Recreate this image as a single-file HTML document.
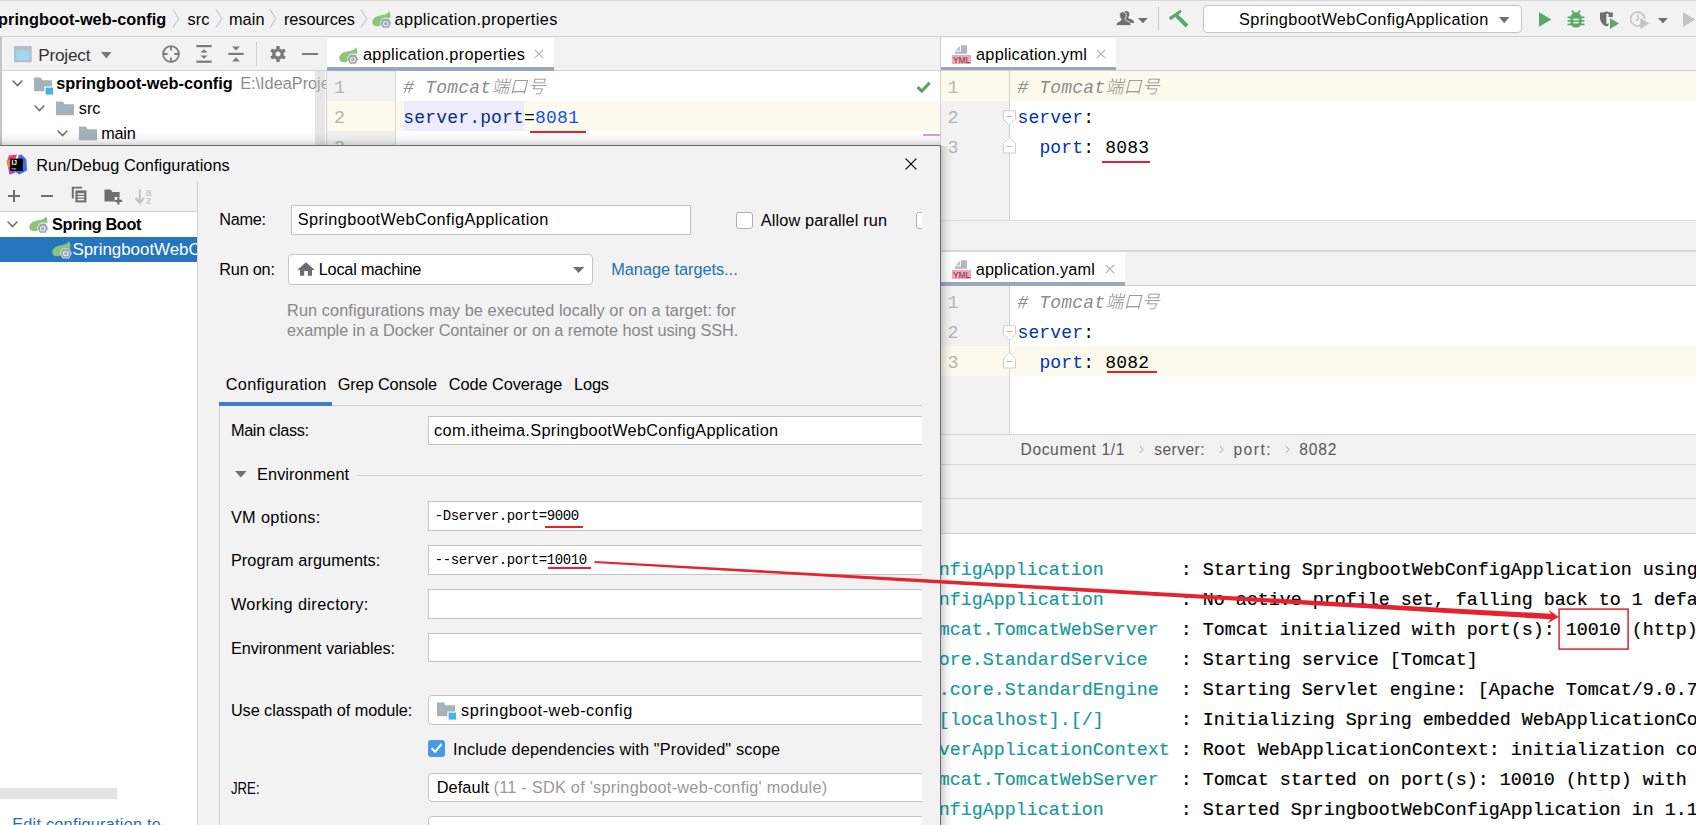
<!DOCTYPE html>
<html lang="zh"><head><meta charset="utf-8"><title>Run/Debug Configurations</title>
<style>
html,body{margin:0;padding:0;background:#f2f2f2;}
#root{position:relative;width:1696px;height:825px;overflow:hidden;background:#f2f2f2;font-family:"Liberation Sans","Noto Sans CJK SC",sans-serif;}
.b{position:absolute;box-sizing:border-box;}
.t{position:absolute;white-space:pre;line-height:20px;height:20px;}
.m{position:absolute;white-space:pre;font-family:"Liberation Mono","Noto Sans CJK SC",monospace;font-size:18px;line-height:30px;height:30px;letter-spacing:0.19px;margin-top:1.1px;}
.c{position:absolute;white-space:pre;font-family:"Liberation Mono","Noto Sans CJK SC",monospace;font-size:18.333px;line-height:30px;height:30px;color:#000;margin-top:2.1px;-webkit-text-stroke:0.2px currentColor;}
.ln{position:absolute;white-space:pre;font-family:"Liberation Mono","Noto Sans CJK SC",monospace;font-size:18.4px;line-height:30px;height:30px;color:#b4b4b4;margin-top:2.3px;}
.cy{color:#1a9a9a}
.k{color:#0033b3}.pk{color:#083080}.n{color:#1750eb}.cm{color:#8c8c8c;font-style:italic}
.clip{position:absolute;overflow:hidden;}
</style></head><body><div id="root">
<div class="b" style="left:0px;top:0px;width:1696px;height:37px;background:#f2f2f2;border-top:1px solid #d6d6d6;border-bottom:1px solid #d1d1d1;"></div>
<span class="t" style="left:-2.00px;top:8.62px;font-size:16.3px;color:#000;font-weight:700;letter-spacing:0.053px;">pringboot-web-config</span>
<svg class="b" style="left:171.5px;top:8.6px;" width="8" height="20" viewBox="0 0 8 20"><path d="M1 0.5 L6.8 9.6 L1 18.7" fill="none" stroke="#b9bcbf" stroke-width="1"/></svg>
<span class="t" style="left:187.50px;top:8.62px;font-size:16.3px;color:#000;font-weight:400;letter-spacing:0.136px;">src</span>
<svg class="b" style="left:214.5px;top:8.6px;" width="8" height="20" viewBox="0 0 8 20"><path d="M1 0.5 L6.8 9.6 L1 18.7" fill="none" stroke="#b9bcbf" stroke-width="1"/></svg>
<span class="t" style="left:229.00px;top:8.62px;font-size:16.3px;color:#000;font-weight:400;letter-spacing:0.056px;">main</span>
<svg class="b" style="left:268.5px;top:8.6px;" width="8" height="20" viewBox="0 0 8 20"><path d="M1 0.5 L6.8 9.6 L1 18.7" fill="none" stroke="#b9bcbf" stroke-width="1"/></svg>
<span class="t" style="left:284.00px;top:8.62px;font-size:16.3px;color:#000;font-weight:400;letter-spacing:-0.071px;">resources</span>
<svg class="b" style="left:359.5px;top:8.6px;" width="8" height="20" viewBox="0 0 8 20"><path d="M1 0.5 L6.8 9.6 L1 18.7" fill="none" stroke="#b9bcbf" stroke-width="1"/></svg>
<svg class="b" style="left:372px;top:10.6px;overflow:visible;" width="20" height="18" viewBox="0 0 20 18"><path d="M17.2 0.2 C15.5 3 12 4 8 4.6 C3.5 5.4 0.2 8 0.3 11.6 C0.4 14.4 3 15.6 6.2 15.2 C7.6 15 8.4 14.6 9 14 L9 9 L13 6.8 L18.4 6.8 C18.6 4.4 18.2 2.2 17.2 0.2 Z" fill="#8cc577"/><path d="M8.2 12.2 L10.7 7.3 L16.9 7.3 L19.4 12.2 L16.9 17.1 L10.7 17.1 Z" fill="#9aa7b0" stroke="#f4f6f4" stroke-width="0.7"/><circle cx="13.8" cy="12.5" r="2.3" fill="none" stroke="#e9edf0" stroke-width="1.1"/><rect x="13.2" y="9.2" width="1.2" height="3.2" fill="#e9edf0" stroke="#9aa7b0" stroke-width="0.5"/></svg>
<span class="t" style="left:394.50px;top:8.62px;font-size:16.3px;color:#000;font-weight:400;letter-spacing:0.383px;">application.properties</span>
<svg class="b" style="left:1116px;top:11px;" width="19" height="15" viewBox="0 0 19 15"><g transform="translate(3.6 -0.6) scale(0.96 0.86)"><path d="M6.6 0.8 C9 0.8 10.4 2.4 10.2 4.8 C10.1 6.4 9.4 7.6 8.8 8.4 C9.2 9.6 11.6 10 13.4 11 C14.4 11.6 14.9 12.8 14.9 14.6 L0.2 14.6 C0.2 12.8 0.8 11.6 1.8 11 C3.8 10 5.4 9.6 5.4 8.4 C4.6 7.6 3.6 6.4 3.5 4.8 C3.3 2.4 4.6 0.8 6.6 0.8 Z" fill="#6e6e6e"/></g><path d="M6.6 0.8 C9 0.8 10.4 2.4 10.2 4.8 C10.1 6.4 9.4 7.6 8.8 8.4 C9.2 9.6 11.6 10 13.4 11 C14.4 11.6 14.9 12.8 14.9 14.6 L0.2 14.6 C0.2 12.8 0.8 11.6 1.8 11 C3.8 10 5.4 9.6 5.4 8.4 C4.6 7.6 3.6 6.4 3.5 4.8 C3.3 2.4 4.6 0.8 6.6 0.8 Z" fill="#6e6e6e" stroke="#f2f2f2" stroke-width="0.9"/></svg>
<svg class="b" style="left:1138.2px;top:18px;" width="9.8" height="5.2" viewBox="0 0 9.8 5.2"><path d="M0 0 H9.8 L4.9 5.2 Z" fill="#6e6e6e"/></svg>
<div class="b" style="left:1158px;top:7px;width:1px;height:24px;background:#c9c9c9;"></div>
<svg class="b" style="left:1168px;top:9px;" width="21" height="19" viewBox="0 0 21 19"><path d="M0.8 8.4 L11.4 1.2 L13.2 1 L13.2 3.6 L2.8 11.2 Z" fill="#59a869"/><path d="M6 6.8 L9 4.4 L20.4 15.6 L17.6 18.4 Z" fill="#59a869"/></svg>
<div class="b" style="left:1203px;top:5px;width:319px;height:28px;background:#fff;border:1px solid #c4c4c4;border-radius:4px;"></div>
<span class="t" style="left:1239.00px;top:9.42px;font-size:16.3px;color:#000;font-weight:400;letter-spacing:0.365px;">SpringbootWebConfigApplication</span>
<svg class="b" style="left:1499px;top:16.6px;" width="10.4" height="6.2" viewBox="0 0 10.4 6.2"><path d="M0 0 H10.4 L5.2 6.2 Z" fill="#6e6e6e"/></svg>
<svg class="b" style="left:1539px;top:11.5px;" width="13" height="15" viewBox="0 0 13 15"><path d="M0 0.2 L12.4 7.5 L0 14.8 Z" fill="#59a869"/></svg>
<svg class="b" style="left:1567px;top:10px;" width="18" height="18" viewBox="0 0 18 18"><g fill="#59a869"><path d="M3.4 9 C3.4 5 5.6 2.6 9 2.6 C12.4 2.6 14.6 5 14.6 9 V12 C14.6 15.4 12.4 17.6 9 17.6 C5.6 17.6 3.4 15.4 3.4 12 Z"/></g><g stroke="#59a869" stroke-width="1.8" fill="none"><path d="M5 0.6 L7.4 3.6"/><path d="M13 0.6 L10.6 3.6"/><path d="M0.6 7.4 H4 M14 7.4 H17.4"/><path d="M0.6 10.9 H4 M14 10.9 H17.4"/><path d="M0.6 14.4 H4 M14 14.4 H17.4"/></g><g fill="#f2f2f2"><rect x="6.3" y="8.6" width="5.4" height="1.6"/><rect x="6.3" y="11.8" width="5.4" height="1.6"/></g></svg>
<svg class="b" style="left:1599px;top:11px;" width="21" height="19" viewBox="0 0 21 19"><path d="M1 1.6 C4 1.6 6 1 7.4 0.2 C9 1 11 1.6 13.8 1.6 V6 H9.6 V3 L7.4 2.4 V13.2 L9.6 12 V14.2 C9 14.8 8.2 15.2 7.4 15.6 C3.4 13.8 1 10.6 1 6.6 Z" fill="#6e6e6e"/><path d="M11 7 L20 12.5 L11 18 Z" fill="#59a869"/></svg>
<svg class="b" style="left:1630px;top:10px;" width="20" height="20" viewBox="0 0 20 20"><path d="M10.6 15.3 A7 7 0 1 1 14.6 9" fill="none" stroke="#c2c2c2" stroke-width="1.5"/><path d="M8 4.6 V9 L6.4 11" fill="none" stroke="#c2c2c2" stroke-width="1.3"/><path d="M10.4 8 L19 13.5 L10.4 19 Z" fill="#c2c2c2"/></svg>
<svg class="b" style="left:1658px;top:17.8px;" width="9.8" height="5.4" viewBox="0 0 9.8 5.4"><path d="M0 0 H9.8 L4.9 5.4 Z" fill="#6e6e6e"/></svg>
<svg class="b" style="left:1683px;top:11.5px;" width="13" height="15" viewBox="0 0 13 15"><path d="M0 0.2 L12.4 7.5 L0 14.8 Z" fill="#c2c2c2"/></svg>
<div class="b" style="left:0px;top:37px;width:2px;height:110px;background:#c6c6c6;"></div>
<div class="b" style="left:2px;top:37px;width:325px;height:34px;background:#f2f2f2;"></div>
<div class="b" style="left:2px;top:70px;width:325px;height:1px;background:#d1d1d1;"></div>
<svg class="b" style="left:14px;top:46.4px;" width="18" height="17" viewBox="0 0 18 17"><rect x="0" y="0" width="17.7" height="16.3" fill="#b7bfc6"/><rect x="2.2" y="4.4" width="13.3" height="9.8" fill="#9fd8ef"/></svg>
<span class="t" style="left:38.20px;top:44.86px;font-size:17.2px;color:#333;font-weight:400;letter-spacing:-0.206px;">Project</span>
<svg class="b" style="left:100.7px;top:52.3px;" width="10.6" height="6.4" viewBox="0 0 10.6 6.4"><path d="M0 0 H10.6 L5.3 6.4 Z" fill="#7a7a7a"/></svg>
<svg class="b" style="left:162px;top:45px;" width="18" height="18" viewBox="0 0 18 18"><circle cx="9" cy="9" r="7.9" fill="none" stroke="#7a7a7a" stroke-width="1.8"/><path d="M9 1 V5.6 M9 12.4 V17 M1 9 H5.6 M12.4 9 H17" stroke="#7a7a7a" stroke-width="1.8"/></svg>
<svg class="b" style="left:196px;top:45px;" width="16" height="18" viewBox="0 0 16 18"><g fill="#7a7a7a"><rect x="0.3" y="0" width="15.4" height="2.2"/><rect x="0.3" y="15.6" width="15.4" height="2.2"/><path d="M8 4.2 L11.6 7.6 H4.4 Z"/><path d="M8 13.8 L11.6 10.4 H4.4 Z"/></g></svg>
<svg class="b" style="left:228px;top:45px;" width="16" height="18" viewBox="0 0 16 18"><g fill="#7a7a7a"><rect x="0.3" y="7.8" width="15.4" height="2.2"/><path d="M8 5.6 L11.8 1.4 H4.2 Z"/><path d="M8 12.2 L11.8 16.4 H4.2 Z"/></g></svg>
<div class="b" style="left:256px;top:42px;width:1px;height:24px;background:#d1d1d1;"></div>
<svg class="b" style="left:270px;top:46px;" width="16" height="16" viewBox="0 0 16 16"><g transform="translate(8 8)"><g fill="#7a7a7a"><rect x="-1.7" y="-8" width="3.4" height="16" rx="0.6"/><rect x="-1.7" y="-8" width="3.4" height="16" rx="0.6" transform="rotate(60)"/><rect x="-1.7" y="-8" width="3.4" height="16" rx="0.6" transform="rotate(120)"/><circle r="5.8"/></g><circle r="2.5" fill="#f2f2f2"/></g></svg>
<div class="b" style="left:302.4px;top:52.8px;width:15.4px;height:2.2px;background:#7a7a7a;"></div>
<div class="b" style="left:2px;top:71px;width:325px;height:76px;background:#fff;"></div>
<svg class="b" style="left:12px;top:80.4px;" width="11" height="7" viewBox="0 0 11 7"><path d="M0.6 0.6 L5.5 5.6 L10.4 0.6" fill="none" stroke="#6e6e6e" stroke-width="1.5"/></svg>
<svg class="b" style="left:34px;top:76.5px;" width="19" height="18" viewBox="0 0 19 18"><path d="M0 0.5 H6.8 L8.6 3.2 H18 V9.4 H10.4 V14.2 H0 Z" fill="#a6b2ba"/><rect x="11.6" y="10.6" width="7.4" height="7" fill="#40b6e0"/></svg>
<span class="t" style="left:56.20px;top:73.02px;font-size:16.3px;color:#000;font-weight:700;letter-spacing:0.012px;">springboot-web-config</span>
<div class="clip" style="left:236px;top:71px;width:90px;height:25px;">
<span class="t" style="left:4.20px;top:2.01px;font-size:16.3px;color:#8c8c8c;font-weight:400;">E:\IdeaProjects</span>
</div>
<svg class="b" style="left:34px;top:105.4px;" width="11" height="7" viewBox="0 0 11 7"><path d="M0.6 0.6 L5.5 5.6 L10.4 0.6" fill="none" stroke="#6e6e6e" stroke-width="1.5"/></svg>
<svg class="b" style="left:56px;top:101px;" width="19" height="18" viewBox="0 0 19 18"><path d="M0 0.5 H6.8 L8.6 3.2 H18 V14.2 H0 Z" fill="#a6b2ba"/></svg>
<span class="t" style="left:78.80px;top:98.02px;font-size:16.3px;color:#000;font-weight:400;letter-spacing:-0.014px;">src</span>
<svg class="b" style="left:56.7px;top:130.4px;" width="11" height="7" viewBox="0 0 11 7"><path d="M0.6 0.6 L5.5 5.6 L10.4 0.6" fill="none" stroke="#6e6e6e" stroke-width="1.5"/></svg>
<svg class="b" style="left:79px;top:126px;" width="19" height="18" viewBox="0 0 19 18"><path d="M0 0.5 H6.8 L8.6 3.2 H18 V14.2 H0 Z" fill="#a6b2ba"/></svg>
<span class="t" style="left:101.20px;top:123.01px;font-size:16.3px;color:#000;font-weight:400;letter-spacing:-0.244px;">main</span>
<div class="b" style="left:315px;top:71px;width:10px;height:76px;background:rgba(200,200,200,0.45);"></div>
<div class="b" style="left:326px;top:37px;width:614px;height:34px;background:#f2f2f2;"></div>
<div class="b" style="left:326px;top:70px;width:614px;height:1px;background:#d1d1d1;"></div>
<div class="b" style="left:327px;top:38px;width:227px;height:33px;background:#fff;"></div>
<div class="b" style="left:327px;top:67px;width:227px;height:4px;background:#9aa7bc;"></div>
<svg class="b" style="left:338.8px;top:46.6px;overflow:visible;" width="20" height="18" viewBox="0 0 20 18"><path d="M17.2 0.2 C15.5 3 12 4 8 4.6 C3.5 5.4 0.2 8 0.3 11.6 C0.4 14.4 3 15.6 6.2 15.2 C7.6 15 8.4 14.6 9 14 L9 9 L13 6.8 L18.4 6.8 C18.6 4.4 18.2 2.2 17.2 0.2 Z" fill="#8cc577"/><path d="M8.2 12.2 L10.7 7.3 L16.9 7.3 L19.4 12.2 L16.9 17.1 L10.7 17.1 Z" fill="#9aa7b0" stroke="#f4f6f4" stroke-width="0.7"/><circle cx="13.8" cy="12.5" r="2.3" fill="none" stroke="#e9edf0" stroke-width="1.1"/><rect x="13.2" y="9.2" width="1.2" height="3.2" fill="#e9edf0" stroke="#9aa7b0" stroke-width="0.5"/></svg>
<span class="t" style="left:362.90px;top:44.21px;font-size:16.3px;color:#000;font-weight:400;letter-spacing:0.340px;">application.properties</span>
<svg class="b" style="left:534px;top:49px;" width="10" height="10" viewBox="0 0 10 10"><path d="M0.8 0.8 L9.2 9.2 M9.2 0.8 L0.8 9.2" stroke="#b0b0b0" stroke-width="1.1"/></svg>
<div class="b" style="left:326px;top:71px;width:1px;height:76px;background:#d1d1d1;"></div>
<div class="b" style="left:327px;top:71px;width:613px;height:76px;background:#fff;"></div>
<div class="b" style="left:327px;top:71px;width:68px;height:76px;background:#f2f2f2;"></div>
<div class="b" style="left:327px;top:101px;width:613px;height:30px;background:#fcfaed;"></div>
<div class="b" style="left:395px;top:71px;width:1px;height:76px;background:#d9d9d9;"></div>
<div class="b" style="left:404px;top:101px;width:120px;height:30px;background:#edebfc;"></div>
<span class="ln" style="left:334px;top:72px;">1</span>
<span class="ln" style="left:334px;top:102px;">2</span>
<span class="ln" style="left:334px;top:132px;">3</span>
<span class="m cm" style="left:403.2px;top:72px;"># Tomcat<span style="font-weight:300">端口号</span></span>
<span class="m" style="left:403.2px;top:102px;"><span class="pk">server.port</span>=<span class="n">8081</span></span>
<div class="b" style="left:530px;top:131px;width:56px;height:2px;background:#e6212b;"></div>
<svg class="b" style="left:916px;top:81.4px;" width="15" height="13" viewBox="0 0 15 13"><path d="M1.6 6.2 L5.8 10.2 L13.6 1.8" fill="none" stroke="#4fa65a" stroke-width="3"/></svg>
<div class="b" style="left:923px;top:134px;width:17px;height:2px;background:#c9a4f2;"></div>
<div class="b" style="left:940px;top:37px;width:1px;height:790px;background:#d1d1d1;"></div>
<div class="b" style="left:941px;top:38px;width:175px;height:33px;background:#fff;"></div>
<div class="b" style="left:941px;top:67px;width:175px;height:4px;background:#9aa7bc;"></div>
<div class="b" style="left:941px;top:70px;width:755px;height:1px;background:#d1d1d1;"></div>
<div class="b" style="left:1117px;top:70px;width:579px;height:1px;background:#d1d1d1;"></div>
<svg class="b" style="left:952px;top:45px;" width="19" height="19" viewBox="0 0 19 19"><rect x="0" y="10" width="19" height="9" fill="#f4a6b7"/><path d="M9 0.2 H15 V8.8 H3 V6.4 H9 Z" fill="#aeb9c0"/><path d="M8.2 0.8 V5.6 H3.4 Z" fill="#b9c3c9"/><text x="9.5" y="17.6" font-family='"Liberation Sans","Noto Sans CJK SC",sans-serif' font-size="8.4" font-weight="400" fill="#5a3844" text-anchor="middle" textLength="17" lengthAdjust="spacingAndGlyphs">YML</text></svg>
<span class="t" style="left:976.10px;top:44.21px;font-size:16.3px;color:#000;font-weight:400;letter-spacing:0.220px;">application.yml</span>
<svg class="b" style="left:1096px;top:49px;" width="10" height="10" viewBox="0 0 10 10"><path d="M0.8 0.8 L9.2 9.2 M9.2 0.8 L0.8 9.2" stroke="#b0b0b0" stroke-width="1.1"/></svg>
<div class="b" style="left:941px;top:71px;width:755px;height:149px;background:#fff;"></div>
<div class="b" style="left:941px;top:71px;width:68px;height:149px;background:#f2f2f2;"></div>
<div class="b" style="left:941px;top:71px;width:755px;height:30px;background:#fcfaed;"></div>
<div class="b" style="left:1009px;top:71px;width:1px;height:149px;background:#d4d4d4;"></div>
<span class="ln" style="left:947.6px;top:72px;">1</span>
<span class="ln" style="left:947.6px;top:102px;">2</span>
<span class="ln" style="left:947.6px;top:132px;">3</span>
<span class="m cm" style="left:1017.4px;top:72px;"># Tomcat<span style="font-weight:300">端口号</span></span>
<span class="m" style="left:1017.4px;top:102px;"><span class="k">server</span>:</span>
<span class="m" style="left:1017.4px;top:132px;">  <span class="k">port</span>: 8083</span>
<div class="b" style="left:1102px;top:161px;width:48px;height:2px;background:#e6212b;"></div>
<svg class="b" style="left:1003px;top:109px;" width="13" height="46" viewBox="0 0 13 46"><path d="M6.5 16 V29" stroke="#d0d0d0" stroke-width="1"/><path d="M0.5 1.8 H12.5 V10.2 L6.5 16.2 L0.5 10.2 Z" fill="#fff" stroke="#d0d0d0"/><path d="M3.4 7.5 H9.6" stroke="#bdbdbd" stroke-width="1"/><path d="M0.5 44 H12.5 V34.6 L6.5 28.6 L0.5 34.6 Z" fill="#fff" stroke="#d0d0d0"/><path d="M3.4 37.5 H9.6" stroke="#bdbdbd" stroke-width="1"/></svg>
<div class="b" style="left:941px;top:220px;width:755px;height:31px;background:#f2f2f2;"></div>
<div class="b" style="left:941px;top:220px;width:755px;height:1px;background:#dadada;"></div>
<div class="b" style="left:941px;top:250px;width:755px;height:2px;background:#d6d6d6;"></div>
<div class="b" style="left:941px;top:252px;width:755px;height:34px;background:#f2f2f2;"></div>
<div class="b" style="left:941px;top:285px;width:755px;height:1px;background:#d1d1d1;"></div>
<div class="b" style="left:941px;top:252px;width:184px;height:34px;background:#fff;"></div>
<div class="b" style="left:941px;top:282px;width:184px;height:4px;background:#9aa7bc;"></div>
<svg class="b" style="left:952px;top:260px;" width="19" height="19" viewBox="0 0 19 19"><rect x="0" y="10" width="19" height="9" fill="#f4a6b7"/><path d="M9 0.2 H15 V8.8 H3 V6.4 H9 Z" fill="#aeb9c0"/><path d="M8.2 0.8 V5.6 H3.4 Z" fill="#b9c3c9"/><text x="9.5" y="17.6" font-family='"Liberation Sans","Noto Sans CJK SC",sans-serif' font-size="8.4" font-weight="400" fill="#5a3844" text-anchor="middle" textLength="17" lengthAdjust="spacingAndGlyphs">YML</text></svg>
<span class="t" style="left:975.70px;top:259.21px;font-size:16.3px;color:#000;font-weight:400;letter-spacing:0.161px;">application.yaml</span>
<svg class="b" style="left:1105px;top:264px;" width="10" height="10" viewBox="0 0 10 10"><path d="M0.8 0.8 L9.2 9.2 M9.2 0.8 L0.8 9.2" stroke="#b0b0b0" stroke-width="1.1"/></svg>
<div class="b" style="left:941px;top:286px;width:755px;height:148px;background:#fff;"></div>
<div class="b" style="left:941px;top:286px;width:68px;height:148px;background:#f2f2f2;"></div>
<div class="b" style="left:941px;top:346px;width:755px;height:30px;background:#fcfaed;"></div>
<div class="b" style="left:1009px;top:286px;width:1px;height:148px;background:#d4d4d4;"></div>
<span class="ln" style="left:947.6px;top:287px;">1</span>
<span class="ln" style="left:947.6px;top:317px;">2</span>
<span class="ln" style="left:947.6px;top:347px;">3</span>
<span class="m cm" style="left:1017.4px;top:287px;"># Tomcat<span style="font-weight:300">端口号</span></span>
<span class="m" style="left:1017.4px;top:317px;"><span class="k">server</span>:</span>
<span class="m" style="left:1017.4px;top:347px;">  <span class="k">port</span>: 8082</span>
<div class="b" style="left:1107px;top:371px;width:50px;height:2px;background:#e6212b;"></div>
<svg class="b" style="left:1003px;top:324px;" width="13" height="46" viewBox="0 0 13 46"><path d="M6.5 16 V29" stroke="#d0d0d0" stroke-width="1"/><path d="M0.5 1.8 H12.5 V10.2 L6.5 16.2 L0.5 10.2 Z" fill="#fff" stroke="#d0d0d0"/><path d="M3.4 7.5 H9.6" stroke="#bdbdbd" stroke-width="1"/><path d="M0.5 44 H12.5 V34.6 L6.5 28.6 L0.5 34.6 Z" fill="#fff" stroke="#d0d0d0"/><path d="M3.4 37.5 H9.6" stroke="#bdbdbd" stroke-width="1"/></svg>
<div class="b" style="left:941px;top:434px;width:755px;height:1px;background:#d6d6d6;"></div>
<div class="b" style="left:941px;top:435px;width:755px;height:29px;background:#f2f2f2;"></div>
<div class="b" style="left:941px;top:464px;width:755px;height:1px;background:#d6d6d6;"></div>
<span class="t" style="left:1020.50px;top:440.38px;font-size:15.6px;color:#595959;font-weight:400;letter-spacing:0.625px;">Document 1/1</span>
<svg class="b" style="left:1139px;top:445px;" width="5" height="9" viewBox="0 0 5 9"><path d="M1 1 L4 4.5 L1 8" fill="none" stroke="#a8a8a8" stroke-width="1"/></svg>
<span class="t" style="left:1154.20px;top:440.38px;font-size:15.6px;color:#595959;font-weight:400;letter-spacing:0.437px;">server:</span>
<svg class="b" style="left:1219px;top:445px;" width="5" height="9" viewBox="0 0 5 9"><path d="M1 1 L4 4.5 L1 8" fill="none" stroke="#a8a8a8" stroke-width="1"/></svg>
<span class="t" style="left:1233.50px;top:440.38px;font-size:15.6px;color:#595959;font-weight:400;letter-spacing:1.446px;">port:</span>
<svg class="b" style="left:1285px;top:445px;" width="5" height="9" viewBox="0 0 5 9"><path d="M1 1 L4 4.5 L1 8" fill="none" stroke="#a8a8a8" stroke-width="1"/></svg>
<span class="t" style="left:1299.30px;top:440.38px;font-size:15.6px;color:#595959;font-weight:400;letter-spacing:0.832px;">8082</span>
<div class="b" style="left:941px;top:498px;width:755px;height:1px;background:#d6d6d6;"></div>
<div class="b" style="left:941px;top:533px;width:755px;height:1px;background:#d1d1d1;"></div>
<div class="b" style="left:941px;top:534px;width:755px;height:291px;background:#fff;"></div>
<div class="clip" style="left:941px;top:533px;width:755px;height:292px;">
<span class="c" style="left:-2.3px;top:20.5px;"><span class="cy">nfigApplication       </span>: Starting SpringbootWebConfigApplication using</span>
<span class="c" style="left:-2.3px;top:50.5px;"><span class="cy">nfigApplication       </span>: No active profile set, falling back to 1 default</span>
<span class="c" style="left:-2.3px;top:80.5px;"><span class="cy">mcat.TomcatWebServer  </span>: Tomcat initialized with port(s): 10010 (http)</span>
<span class="c" style="left:-2.3px;top:110.5px;"><span class="cy">ore.StandardService   </span>: Starting service [Tomcat]</span>
<span class="c" style="left:-2.3px;top:140.5px;"><span class="cy">.core.StandardEngine  </span>: Starting Servlet engine: [Apache Tomcat/9.0.70]</span>
<span class="c" style="left:-2.3px;top:170.5px;"><span class="cy">[localhost].[/]       </span>: Initializing Spring embedded WebApplicationContext</span>
<span class="c" style="left:-2.3px;top:200.5px;"><span class="cy">verApplicationContext </span>: Root WebApplicationContext: initialization completed</span>
<span class="c" style="left:-2.3px;top:230.5px;"><span class="cy">mcat.TomcatWebServer  </span>: Tomcat started on port(s): 10010 (http) with context</span>
<span class="c" style="left:-2.3px;top:260.5px;"><span class="cy">nfigApplication       </span>: Started SpringbootWebConfigApplication in 1.129 seconds</span>
</div>
<svg class="b" style="left:1556px;top:606px;" width="76" height="46" viewBox="0 0 76 46"><rect x="3.1" y="3.1" width="69" height="40" fill="none" stroke="#e0212d" stroke-width="1.5"/></svg>
<div class="b" style="left:0px;top:131px;width:940px;height:15px;background:linear-gradient(to bottom,rgba(0,0,0,0) 0%,rgba(0,0,0,0.04) 50%,rgba(0,0,0,0.16) 100%);"></div>
<div class="b" style="left:941px;top:146px;width:12px;height:679px;background:linear-gradient(to right,rgba(0,0,0,0.18),rgba(0,0,0,0.05) 50%,rgba(0,0,0,0));"></div>
<div class="b" style="left:0px;top:145px;width:941px;height:680px;background:#f2f2f2;border-top:1px solid #6b6b6b;border-right:1px solid #6b6b6b;"></div>
<svg class="b" style="left:6px;top:153.6px;" width="22" height="21" viewBox="0 0 22 21"><path d="M3 1.5 L11 0.5 L8 8 L1.5 6 Z" fill="#fc3468"/><path d="M0.6 6.5 L6 5 L6 14 L1.4 12 Z" fill="#fc801d"/><path d="M2 13 L8 12 L9 19 L3.4 20.4 Z" fill="#b93bd2"/><path d="M13 1 L20.4 5.4 L21 16.4 L13.4 20.6 L8 17 Z" fill="#3f6ee8"/><path d="M12 1.4 L15.4 0.4 L20 5 L18 8 Z" fill="#5361e8"/><rect x="4.2" y="4.6" width="12.6" height="12.4" fill="#000"/><text x="5.4" y="11.4" font-family='"Liberation Sans","Noto Sans CJK SC",sans-serif' font-size="6.6" font-weight="700" fill="#fff">IJ</text><rect x="5.6" y="14.4" width="4.6" height="1" fill="#bbb"/></svg>
<span class="t" style="left:36.30px;top:154.81px;font-size:16.3px;color:#000;font-weight:400;letter-spacing:0.069px;">Run/Debug Configurations</span>
<svg class="b" style="left:905px;top:158px;" width="12" height="12" viewBox="0 0 12 12"><path d="M0.6 0.6 L11.4 11.4 M11.4 0.6 L0.6 11.4" stroke="#000" stroke-width="1.2"/></svg>
<div class="b" style="left:0px;top:182px;width:197px;height:643px;background:#f2f2f2;"></div>
<div class="b" style="left:197px;top:182px;width:1px;height:643px;background:#d1d1d1;"></div>
<div class="b" style="left:0px;top:211px;width:197px;height:1px;background:#d1d1d1;"></div>
<div class="b" style="left:0px;top:212px;width:197px;height:613px;background:#fff;"></div>
<svg class="b" style="left:8px;top:189.6px;" width="12" height="12" viewBox="0 0 12 12"><path d="M6 0 V12 M0 6 H12" stroke="#6e6e6e" stroke-width="2"/></svg>
<div class="b" style="left:40.8px;top:194.6px;width:12.6px;height:2px;background:#6e6e6e;"></div>
<svg class="b" style="left:71px;top:186.4px;" width="16" height="17" viewBox="0 0 16 17"><path d="M0.8 0.8 H11 V2.6 H2.8 V12.4 H0.8 Z" fill="#6e6e6e"/><path d="M4.4 4.4 H15.4 V16.4 H4.4 Z" fill="#6e6e6e"/><g fill="#f2f2f2"><rect x="6.6" y="7.2" width="6.6" height="1.6"/><rect x="6.6" y="10" width="6.6" height="1.6"/><rect x="6.6" y="12.8" width="6.6" height="1.6"/></g></svg>
<svg class="b" style="left:104px;top:189px;" width="19" height="16" viewBox="0 0 19 16"><path d="M0.5 0.4 H6.6 L8.4 3 H15.6 V8 H10.6 V12.6 H0.5 Z" fill="#6e6e6e"/><path d="M14.4 8.2 V15.6 M10.7 11.9 H18.1" stroke="#6e6e6e" stroke-width="2.2"/></svg>
<svg class="b" style="left:135px;top:188.5px;" width="18" height="16" viewBox="0 0 18 16"><path d="M4.8 0.5 V12 M0.6 9 L4.8 13.8 L9 9" fill="none" stroke="#c2c2c2" stroke-width="2.1"/><text x="10.6" y="6.6" font-family='"Liberation Sans","Noto Sans CJK SC",sans-serif' font-size="10.6" font-weight="700" fill="#c8c8c8">a</text><text x="11" y="15.2" font-family='"Liberation Sans","Noto Sans CJK SC",sans-serif' font-size="10.6" font-weight="700" fill="#c8c8c8">z</text></svg>
<svg class="b" style="left:7px;top:221px;" width="11" height="7" viewBox="0 0 11 7"><path d="M0.6 0.6 L5.5 5.6 L10.4 0.6" fill="none" stroke="#6e6e6e" stroke-width="1.5"/></svg>
<svg class="b" style="left:29px;top:215.5px;overflow:visible;" width="20" height="18" viewBox="0 0 20 18"><path d="M17.2 0.2 C15.5 3 12 4 8 4.6 C3.5 5.4 0.2 8 0.3 11.6 C0.4 14.4 3 15.6 6.2 15.2 C7.6 15 8.4 14.6 9 14 L9 9 L13 6.8 L18.4 6.8 C18.6 4.4 18.2 2.2 17.2 0.2 Z" fill="#8cc577"/><path d="M8.2 12.2 L10.7 7.3 L16.9 7.3 L19.4 12.2 L16.9 17.1 L10.7 17.1 Z" fill="#9aa7b0" stroke="#f4f6f4" stroke-width="0.7"/><circle cx="13.8" cy="12.5" r="2.3" fill="none" stroke="#e9edf0" stroke-width="1.1"/><rect x="13.2" y="9.2" width="1.2" height="3.2" fill="#e9edf0" stroke="#9aa7b0" stroke-width="0.5"/></svg>
<span class="t" style="left:52.10px;top:214.22px;font-size:16.3px;color:#000;font-weight:700;letter-spacing:-0.386px;">Spring Boot</span>
<div class="b" style="left:0px;top:237px;width:197px;height:25px;background:#2675bf;"></div>
<svg class="b" style="left:52px;top:241px;overflow:visible;" width="20" height="18" viewBox="0 0 20 18"><path d="M17.2 0.2 C15.5 3 12 4 8 4.6 C3.5 5.4 0.2 8 0.3 11.6 C0.4 14.4 3 15.6 6.2 15.2 C7.6 15 8.4 14.6 9 14 L9 9 L13 6.8 L18.4 6.8 C18.6 4.4 18.2 2.2 17.2 0.2 Z" fill="#8cc577"/><path d="M8.2 12.2 L10.7 7.3 L16.9 7.3 L19.4 12.2 L16.9 17.1 L10.7 17.1 Z" fill="#9aa7b0" stroke="#f4f6f4" stroke-width="0.7"/><circle cx="13.8" cy="12.5" r="2.3" fill="none" stroke="#e9edf0" stroke-width="1.1"/><rect x="13.2" y="9.2" width="1.2" height="3.2" fill="#e9edf0" stroke="#9aa7b0" stroke-width="0.5"/></svg>
<div class="clip" style="left:60px;top:237px;width:137px;height:25px;">
<span class="t" style="left:12.40px;top:3.44px;font-size:16.9px;color:#fff;font-weight:400;">SpringbootWebConfigApplication</span>
</div>
<div class="b" style="left:0px;top:787px;width:118px;height:13px;background:#e3e3e3;border:1px solid #fafafa;border-left:none;"></div>
<div class="clip" style="left:0px;top:800px;width:161px;height:25px;">
<span class="t" style="left:12.20px;top:13.62px;font-size:16.3px;color:#2470b3;font-weight:400;letter-spacing:0.236px;">Edit configuration te</span>
</div>
<span class="t" style="left:219.30px;top:209.22px;font-size:16.3px;color:#000;font-weight:400;letter-spacing:-0.327px;">Name:</span>
<div class="b" style="left:290.5px;top:205px;width:400px;height:30px;background:#fff;border:1px solid #c4c4c4;"></div>
<span class="t" style="left:297.70px;top:209.22px;font-size:16.3px;color:#000;font-weight:400;letter-spacing:0.409px;">SpringbootWebConfigApplication</span>
<div class="b" style="left:736px;top:212px;width:17px;height:17px;background:#fff;border:1px solid #b0b0b0;border-radius:3px;"></div>
<span class="t" style="left:760.70px;top:210.22px;font-size:16.3px;color:#000;font-weight:400;letter-spacing:0.140px;">Allow parallel run</span>
<div class="clip" style="left:916px;top:212px;width:6px;height:17px;"><div class="b" style="left:0;top:0;width:17px;height:17px;background:#fff;border:1px solid #b0b0b0;border-radius:3px;"></div></div>
<span class="t" style="left:219.30px;top:259.21px;font-size:16.3px;color:#000;font-weight:400;letter-spacing:-0.232px;">Run on:</span>
<div class="b" style="left:288px;top:254px;width:305px;height:31px;background:#fff;border:1px solid #c4c4c4;border-radius:4px;"></div>
<svg class="b" style="left:297px;top:262px;" width="18" height="14" viewBox="0 0 18 14"><path d="M9 0.2 L17.8 8 H15 V13.8 H10.8 V9 H7.2 V13.8 H3 V8 H0.2 Z" fill="#6e6e6e"/></svg>
<span class="t" style="left:318.70px;top:259.21px;font-size:16.3px;color:#000;font-weight:400;letter-spacing:-0.192px;">Local machine</span>
<svg class="b" style="left:572.8px;top:267.4px;" width="11.2" height="6" viewBox="0 0 11.2 6"><path d="M0 0 H11.2 L5.6 6 Z" fill="#6e6e6e"/></svg>
<span class="t" style="left:611.30px;top:259.21px;font-size:16.3px;color:#2470b3;font-weight:400;letter-spacing:-0.022px;">Manage targets...</span>
<span class="t" style="left:287.10px;top:299.81px;font-size:16.3px;color:#878787;font-weight:400;letter-spacing:0.086px;">Run configurations may be executed locally or on a target: for</span>
<span class="t" style="left:287.10px;top:320.42px;font-size:16.3px;color:#878787;font-weight:400;letter-spacing:-0.068px;">example in a Docker Container or on a remote host using SSH.</span>
<span class="t" style="left:225.70px;top:374.21px;font-size:16.3px;color:#000;font-weight:400;letter-spacing:0.320px;">Configuration</span>
<span class="t" style="left:337.70px;top:374.21px;font-size:16.3px;color:#000;font-weight:400;letter-spacing:-0.097px;">Grep Console</span>
<span class="t" style="left:448.70px;top:374.21px;font-size:16.3px;color:#000;font-weight:400;letter-spacing:-0.031px;">Code Coverage</span>
<span class="t" style="left:574.10px;top:374.21px;font-size:16.3px;color:#000;font-weight:400;letter-spacing:-0.149px;">Logs</span>
<div class="b" style="left:219px;top:405px;width:703px;height:1px;background:#d1d1d1;"></div>
<div class="b" style="left:219px;top:402px;width:113px;height:4px;background:#3d7fcc;"></div>
<div class="b" style="left:219px;top:406px;width:1px;height:419px;background:#cfcfcf;"></div>
<span class="t" style="left:230.90px;top:420.21px;font-size:16.3px;color:#000;font-weight:400;letter-spacing:-0.323px;">Main class:</span>
<div class="clip" style="left:428px;top:416px;width:494px;height:29px;"><div class="b" style="left:0;top:0;width:600px;height:29px;background:#fff;border:1px solid #c4c4c4;border-radius:0px;"></div></div>
<span class="t" style="left:434.10px;top:420.21px;font-size:16.3px;color:#000;font-weight:400;letter-spacing:0.319px;">com.itheima.SpringbootWebConfigApplication</span>
<svg class="b" style="left:235px;top:470.8px;" width="12" height="7" viewBox="0 0 12 7"><path d="M0 0 H11.6 L5.8 6.6 Z" fill="#6e6e6e"/></svg>
<span class="t" style="left:257.10px;top:464.21px;font-size:16.3px;color:#000;font-weight:400;letter-spacing:0.059px;">Environment</span>
<div class="b" style="left:357px;top:475px;width:565px;height:1px;background:#d1d1d1;"></div>
<span class="t" style="left:230.90px;top:507.02px;font-size:16.3px;color:#000;font-weight:400;letter-spacing:0.353px;">VM options:</span>
<div class="clip" style="left:428px;top:501px;width:494px;height:30px;"><div class="b" style="left:0;top:0;width:600px;height:30px;background:#fff;border:1px solid #c4c4c4;border-radius:0px;"></div></div>
<span class="t" style="left:434.8px;top:506px;font-size:14px;font-family:'Liberation Mono','Noto Sans CJK SC',monospace;letter-spacing:-0.4px;">-Dserver.port=9000</span>
<div class="b" style="left:545px;top:526px;width:38px;height:2px;background:#e6212b;"></div>
<span class="t" style="left:230.90px;top:550.21px;font-size:16.3px;color:#000;font-weight:400;letter-spacing:0.060px;">Program arguments:</span>
<div class="clip" style="left:428px;top:545px;width:494px;height:30px;"><div class="b" style="left:0;top:0;width:600px;height:30px;background:#fff;border:1px solid #c4c4c4;border-radius:0px;"></div></div>
<span class="t" style="left:434.8px;top:549.6px;font-size:14px;font-family:'Liberation Mono','Noto Sans CJK SC',monospace;letter-spacing:-0.4px;">--server.port=10010</span>
<div class="b" style="left:548px;top:567px;width:43px;height:2px;background:#e6212b;"></div>
<span class="t" style="left:230.90px;top:594.21px;font-size:16.3px;color:#000;font-weight:400;letter-spacing:0.385px;">Working directory:</span>
<div class="clip" style="left:428px;top:589px;width:494px;height:30px;"><div class="b" style="left:0;top:0;width:600px;height:30px;background:#fff;border:1px solid #c4c4c4;border-radius:0px;"></div></div>
<span class="t" style="left:230.90px;top:638.11px;font-size:16.3px;color:#000;font-weight:400;letter-spacing:-0.071px;">Environment variables:</span>
<div class="clip" style="left:428px;top:632.7px;width:494px;height:29.5px;"><div class="b" style="left:0;top:0;width:600px;height:29.5px;background:#fff;border:1px solid #c4c4c4;border-radius:0px;"></div></div>
<span class="t" style="left:230.90px;top:700.31px;font-size:16.3px;color:#000;font-weight:400;letter-spacing:-0.062px;">Use classpath of module:</span>
<div class="clip" style="left:428px;top:695px;width:494px;height:29.7px;"><div class="b" style="left:0;top:0;width:600px;height:29.7px;background:#fff;border:1px solid #c4c4c4;border-radius:4px;"></div></div>
<svg class="b" style="left:437px;top:701.5px;" width="19" height="18" viewBox="0 0 19 18"><path d="M0 0.5 H6.8 L8.6 3.2 H18 V9.4 H10.4 V14.2 H0 Z" fill="#a6b2ba"/><rect x="11.6" y="10.6" width="7.4" height="7" fill="#40b6e0"/></svg>
<span class="t" style="left:461.10px;top:700.21px;font-size:16.3px;color:#000;font-weight:400;letter-spacing:0.551px;">springboot-web-config</span>
<div class="b" style="left:427.7px;top:739.5px;width:17.6px;height:17.6px;background:#4b98e6;border-radius:3px;"></div>
<svg class="b" style="left:430px;top:742.4px;" width="13" height="12" viewBox="0 0 13 12"><path d="M1.6 6.2 L5.2 9.8 L11.6 1.8" fill="none" stroke="#fff" stroke-width="2.1"/></svg>
<span class="t" style="left:453.10px;top:739.41px;font-size:16.3px;color:#000;font-weight:400;letter-spacing:0.166px;">Include dependencies with "Provided" scope</span>
<span class="t" style="left:230.90px;top:778.01px;font-size:16.3px;color:#000;font-weight:400;transform-origin:0 50%;transform:scaleX(0.8097);">JRE:</span>
<div class="clip" style="left:428px;top:772.8px;width:494px;height:29px;"><div class="b" style="left:0;top:0;width:600px;height:29px;background:#fff;border:1px solid #c4c4c4;border-radius:4px;"></div></div>
<span class="t" style="left:436.70px;top:777.41px;font-size:16.3px;color:#000;font-weight:400;letter-spacing:0.109px;">Default</span>
<span class="t" style="left:493.50px;top:777.41px;font-size:16.3px;color:#999;font-weight:400;letter-spacing:0.255px;">(11 - SDK of 'springboot-web-config' module)</span>
<div class="clip" style="left:428px;top:816px;width:494px;height:30px;"><div class="b" style="left:0;top:0;width:600px;height:30px;background:#fff;border:1px solid #c4c4c4;border-radius:4px;"></div></div>
<svg class="b" style="left:0px;top:0px;pointer-events:none;" width="1696" height="825" viewBox="0 0 1696 825"><path d="M594.5 561.1 L940 580.0 L1380 604.4 L1551 613.8 L1548.4 609.8 L1558.8 616.9 L1547.6 623.2 L1550.6 619.2 L1380 609.1 L940 583.4 L594.5 562.9 Z" fill="#e5222e"/></svg>
</div></body></html>
